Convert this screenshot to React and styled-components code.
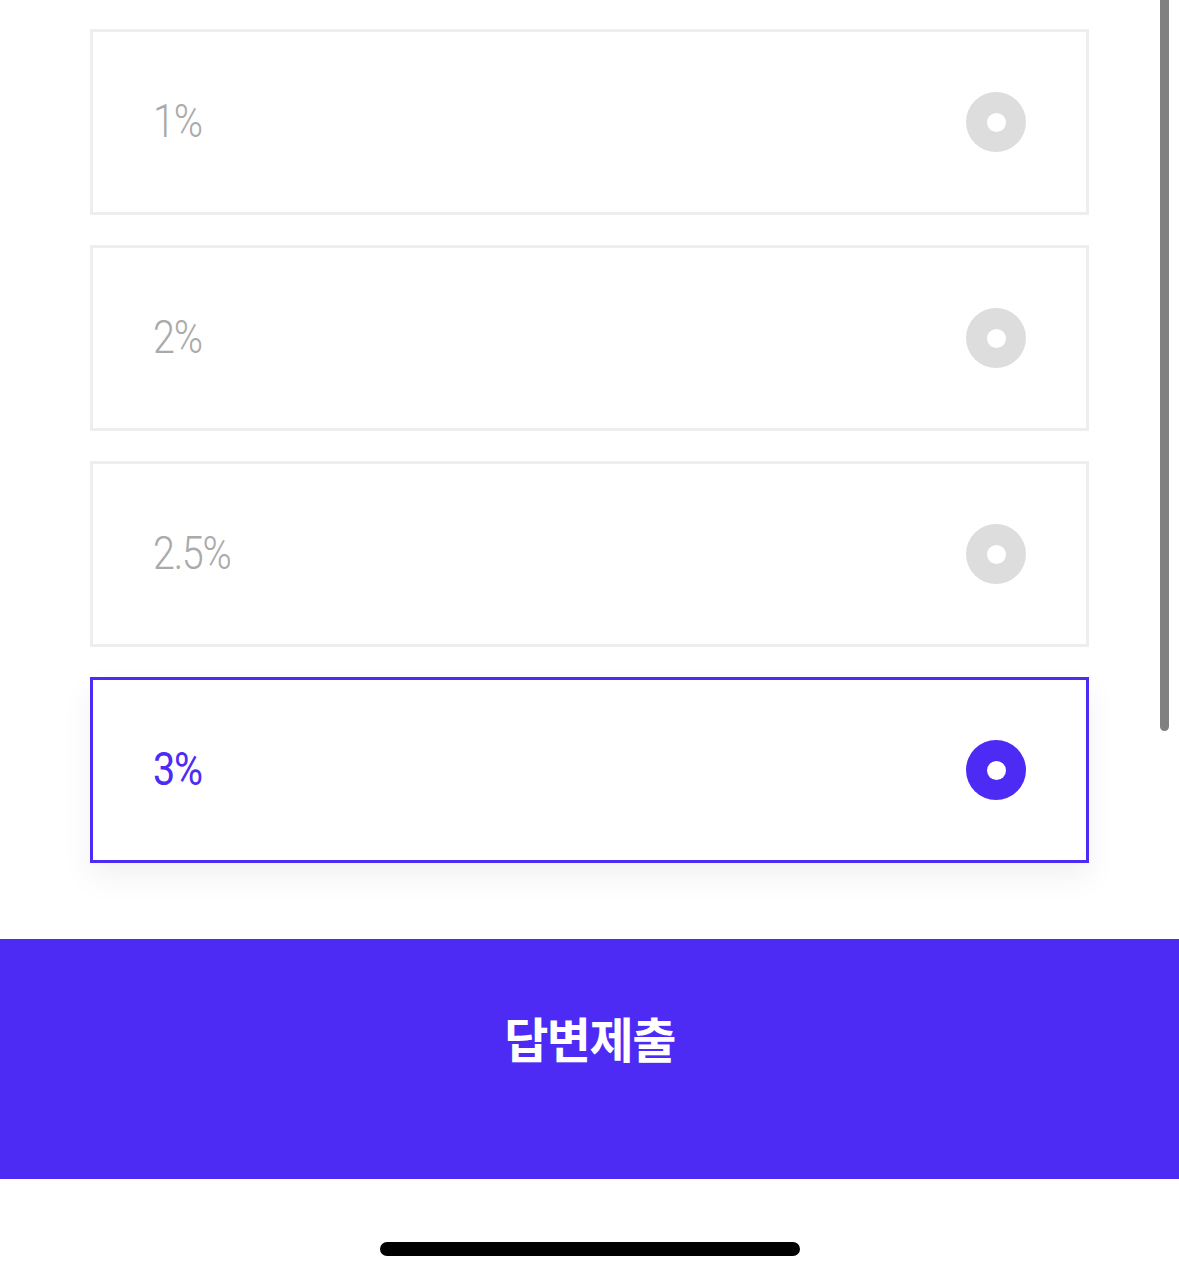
import React, { useState } from 'react'
import styled, { createGlobalStyle } from 'styled-components'

const GlobalStyle = createGlobalStyle`
  html, body { margin: 0; padding: 0; background: #fff; overflow: hidden; }
  body { font-family: Roboto, "Noto Sans CJK KR", sans-serif; }
`

const PURPLE = '#4e2bf5'

const Screen = styled.div`
  position: relative;
  width: 1179px;
  height: 1281px;
  display: flex;
  flex-direction: column;
  background: #fff;
`
const List = styled.div`
  display: flex;
  flex-direction: column;
  gap: 30px;
  padding: 29px 90px 0;
`
const Option = styled.div`
  box-sizing: border-box;
  height: 186px;
  display: flex;
  align-items: center;
  justify-content: space-between;
  padding: 0 60px 0 60px;
  border: 3px solid ${p => (p.$active ? PURPLE : '#eeeeee')};
  background: #fff;
  box-shadow: ${p => (p.$active ? '0 14px 30px rgba(0, 0, 0, 0.06)' : 'none')};
  cursor: pointer;
`
const Label = styled.span`
  display: inline-block;
  font-family: Roboto, sans-serif;
  font-weight: ${p => (p.$active ? 400 : 300)};
  font-size: 46px;
  line-height: 1;
  letter-spacing: -1.5px;
  transform: translateY(-1px) scaleX(0.86);
  transform-origin: left center;
  color: ${p => (p.$active ? PURPLE : '#aaaaaa')};
`
const Radio = styled.span`
  width: 60px;
  height: 60px;
  border-radius: 50%;
  background: ${p => (p.$active ? PURPLE : '#dddddd')};
  display: flex;
  align-items: center;
  justify-content: center;
  &::after {
    content: '';
    width: 19px;
    height: 19px;
    border-radius: 50%;
    background: #fff;
  }
`
const Submit = styled.button`
  margin-top: 76px;
  height: 240px;
  width: 100%;
  border: 0;
  background: ${PURPLE};
  color: #fff;
  font-family: "Noto Sans CJK KR", sans-serif;
  font-weight: 700;
  font-size: 48px;
  letter-spacing: -1.5px;
  padding: 0 0 44px;
`
const HomeArea = styled.div`
  flex: 1;
  display: flex;
  justify-content: center;
  align-items: flex-end;
  padding-bottom: 25px;
`
const HomeBar = styled.div`
  width: 420px;
  height: 14px;
  border-radius: 7px;
  background: #000;
`
const ScrollThumb = styled.div`
  position: absolute;
  top: 0;
  left: 1160px;
  width: 9px;
  height: 731px;
  background: #808080;
  border-radius: 0 0 5px 5px;
`

const options = ['1%', '2%', '2.5%', '3%']

export default function App() {
  const [selected, setSelected] = useState(3)
  return (
    <Screen>
      <GlobalStyle />
      <List>
        {options.map((o, i) => (
          <Option key={o} $active={selected === i} onClick={() => setSelected(i)}>
            <Label $active={selected === i}>{o}</Label>
            <Radio $active={selected === i} />
          </Option>
        ))}
      </List>
      <Submit>답변제출</Submit>
      <HomeArea>
        <HomeBar />
      </HomeArea>
      <ScrollThumb />
    </Screen>
  )
}
